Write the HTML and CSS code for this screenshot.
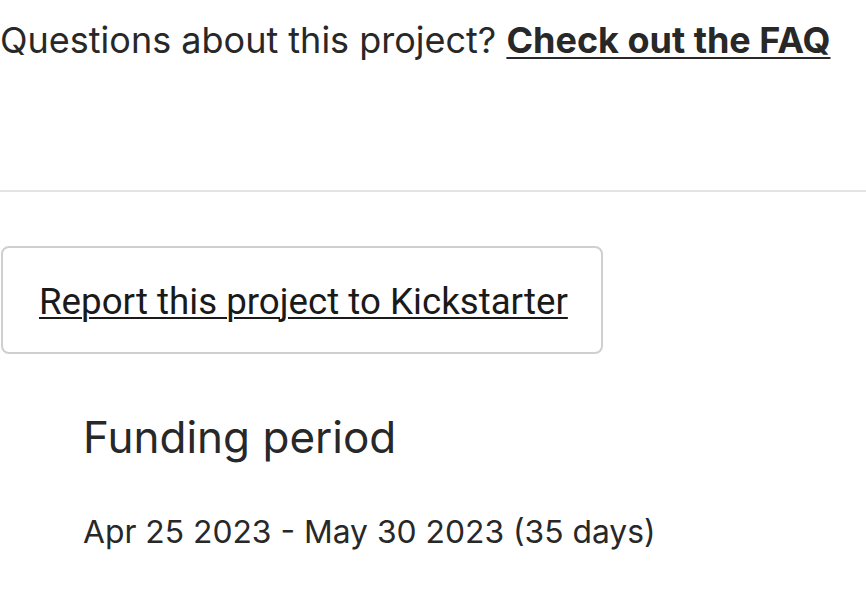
FILE: index.html
```html
<!DOCTYPE html>
<html lang="en">
<head>
    <meta charset="UTF-8">
    <meta name="viewport" content="width=device-width, initial-scale=1.0">
    <title>Project details</title>
    <link rel="stylesheet" href="styles.css">
</head>
<body>
    <div class="page">
        <p class="faq-text">
            Questions about this project? <a href="#" class="faq-link">Check out the FAQ</a>
        </p>

        <hr class="divider">

        <a href="#" class="report-button">Report this project to Kickstarter</a>

        <div class="funding">
            <h2 class="funding-title">Funding period</h2>
            <p class="funding-dates">Apr 25 2023 - May 30 2023 (35 days)</p>
        </div>
    </div>
</body>
</html>
```

FILE: styles.css
```css
:root {
    --text: #282828;
    --line: #e3e3e3;
    --border: #cfcfcf;
}

body {
    margin: 0;
    padding: 0;
    background: #fff;
    color: var(--text);
    font-family: 'Inter', 'Noto Sans', sans-serif;
}

.faq-text {
    margin: 0;
    padding-top: 17px;
    font-size: 36px;
    line-height: 46px;
    white-space: nowrap;
}
.faq-link {
    color: var(--text);
    font-weight: 700;
    text-decoration: underline;
    text-decoration-thickness: 2px;
    text-underline-offset: 4px;
}

.divider {
    border: none;
    border-top: 2px solid var(--line);
    margin: 127px 0 0;
}

/* Report button */
.report-button {
    display: block;
    margin: 54px 0 0 1px;
    box-sizing: border-box;
    width: 602px;
    height: 108px;
    padding: 32px 0 0 36px;
    border: 2px solid var(--border);
    border-radius: 8px;
    font-family: 'Roboto', sans-serif;
    font-size: 36.7px;
    line-height: 44px;
    color: #1a1a1a;
    text-decoration: underline;
    text-decoration-thickness: 2px;
    text-underline-offset: 3px;
    white-space: nowrap;
}

.funding {
    padding-left: 83px;
}
.funding-title {
    margin: 56px 0 0;
    font-size: 44px;
    font-weight: 400;
    line-height: 54px;
}
.funding-dates {
    margin: 48px 0 0;
    font-size: 31.8px;
    line-height: 40px;
}
```
